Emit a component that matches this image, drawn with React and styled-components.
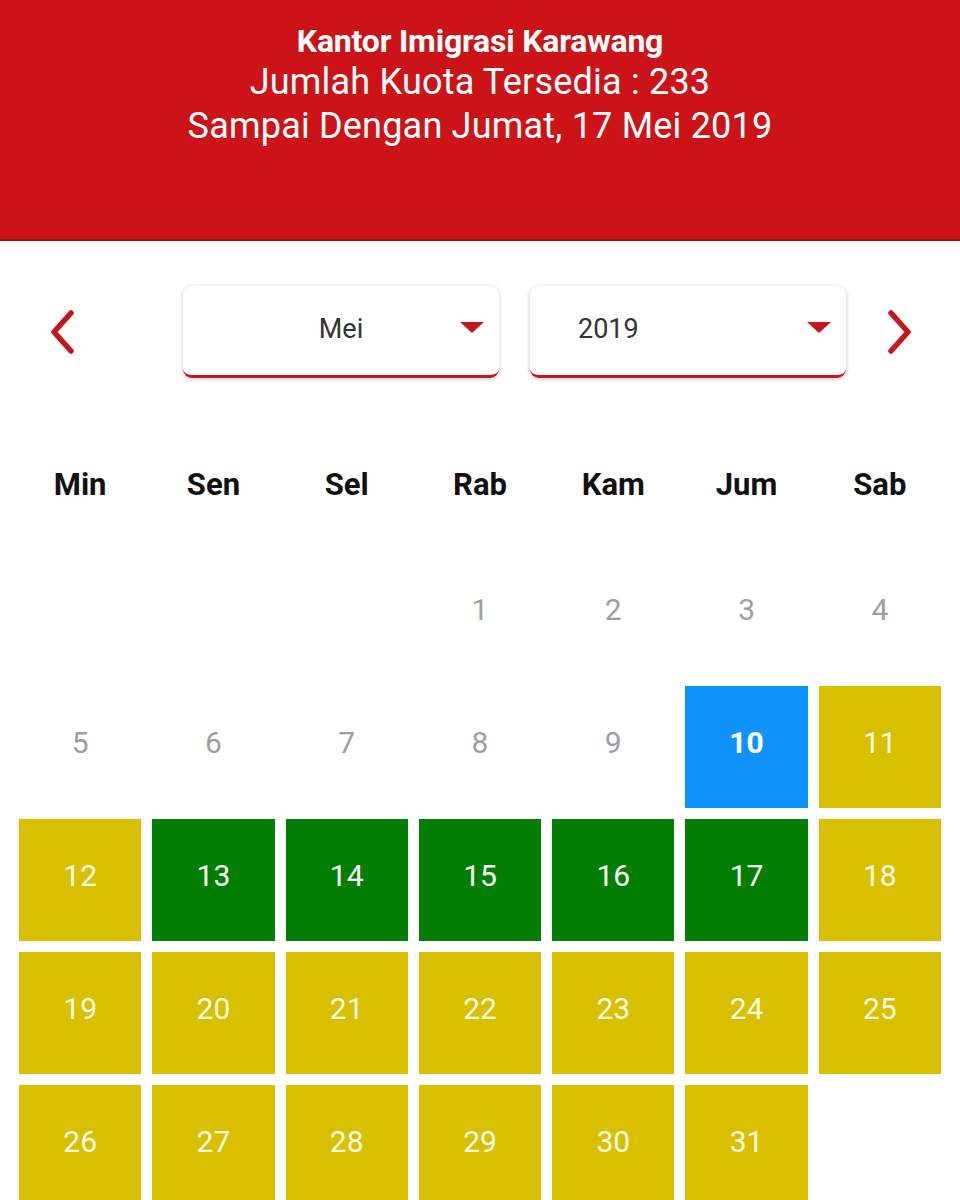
import React from "react";
import styled, { createGlobalStyle } from "styled-components";

const Global = createGlobalStyle`
  body {
    margin: 0;
    background: #fff;
    font-family: Roboto, "Noto Sans", Arial, sans-serif;
  }
`

const Header = styled.header`
  background: #cc1418;
  height: 241px;
  box-sizing: border-box;
  padding-top: 22px;
  color: #fff;
  text-align: center;
  border-bottom: 2px solid #a50f12;
`
const Title = styled.div`
  font-size: 32px;
  font-weight: 700;
  line-height: 38px;
  letter-spacing: -0.2px;
`
const SubLine = styled.div`
  font-size: 36px;
  line-height: 44px;
  letter-spacing: 0.2px;
`

const Nav = styled.div`
  display: flex;
  align-items: center;
  padding: 44px 0 0 42px;
  height: 94px;
`
const Arrow = styled.button`
  border: none;
  background: none;
  padding: 0;
  width: 40px;
  height: 50px;
  display: flex;
  align-items: center;
  justify-content: center;
  cursor: pointer;
`
const SelectBox = styled.div`
  width: 316px;
  height: 92px;
  box-sizing: border-box;
  margin-left: ${p => p.$ml}px;
  background: #fff;
  border-radius: 9px;
  box-shadow: 0 1px 5px rgba(0, 0, 0, 0.22);
  border-bottom: 3px solid #c4161c;
  display: flex;
  align-items: center;
  justify-content: ${p => (p.$center ? "center" : "flex-start")};
  padding: 0 ${p => (p.$center ? 0 : 48)}px 4px;
  position: relative;
  font-size: 27px;
  color: #333;
`
const Caret = styled.span`
  position: absolute;
  right: 15px;
  top: 36px;
  width: 0;
  height: 0;
  border-left: 12px solid transparent;
  border-right: 12px solid transparent;
  border-top: 11px solid #c4161c;
`

const Weekdays = styled.div`
  display: grid;
  grid-template-columns: repeat(7, 1fr);
  column-gap: 11px;
  padding: 0 19px;
  margin-top: 70px;
  height: 70px;
  align-items: center;
`
const Weekday = styled.div`
  text-align: center;
  font-size: 31px;
  font-weight: 700;
  color: #111;
`

const Grid = styled.div`
  display: grid;
  grid-template-columns: repeat(7, 1fr);
  grid-auto-rows: 122px;
  gap: 11px;
  padding: 0 19px;
  margin-top: 34px;
`
const colors = {
  yellow: "#d8bf00",
  green: "#027f02",
  blue: "#0f93fb",
}
const Day = styled.div`
  display: flex;
  align-items: center;
  justify-content: center;
  padding-bottom: 9px;
  box-sizing: border-box;
  font-size: 30px;
  font-weight: ${p => (p.$bold ? 700 : 400)};
  background: ${p => (p.$kind ? colors[p.$kind] : "transparent")};
  color: ${p => (p.$kind ? (p.$kind === "yellow" ? "#fffbe6" : "#fff") : "#9e9e9e")};
`

const Chevron = ({ dir }) => (
  <svg width="26" height="44" viewBox="0 0 26 44">
    <path
      d={dir === "left" ? "M22 3 L5 22 L22 41" : "M4 3 L21 22 L4 41"}
      fill="none"
      stroke="#c4161c"
      strokeWidth="5.5"
      strokeLinecap="round"
      strokeLinejoin="round"
    />
  </svg>
)

const days = ["Min", "Sen", "Sel", "Rab", "Kam", "Jum", "Sab"]

const kindOf = d => {
  if (d < 10) return null
  if (d === 10) return "blue"
  if (d >= 13 && d <= 17) return "green"
  return "yellow"
}

export default function App() {
  const cells = []
  for (let i = 0; i < 3; i++) cells.push(<div key={"e" + i} />)
  for (let d = 1; d <= 31; d++) {
    cells.push(
      <Day key={d} $kind={kindOf(d)} $bold={d === 10}>
        {d}
      </Day>
    )
  }
  return (
    <>
      <Global />
      <Header>
        <Title>Kantor Imigrasi Karawang</Title>
        <SubLine>Jumlah Kuota Tersedia : 233</SubLine>
        <SubLine>Sampai Dengan Jumat, 17 Mei 2019</SubLine>
      </Header>
      <Nav>
        <Arrow aria-label="Bulan sebelumnya">
          <Chevron dir="left" />
        </Arrow>
        <SelectBox $ml={101} $center>
          Mei
          <Caret />
        </SelectBox>
        <SelectBox $ml={31}>
          2019
          <Caret />
        </SelectBox>
        <Arrow aria-label="Bulan berikutnya" style={{ marginLeft: 34 }}>
          <Chevron dir="right" />
        </Arrow>
      </Nav>
      <Weekdays>
        {days.map(d => (
          <Weekday key={d}>{d}</Weekday>
        ))}
      </Weekdays>
      <Grid>{cells}</Grid>
    </>
  )
}
